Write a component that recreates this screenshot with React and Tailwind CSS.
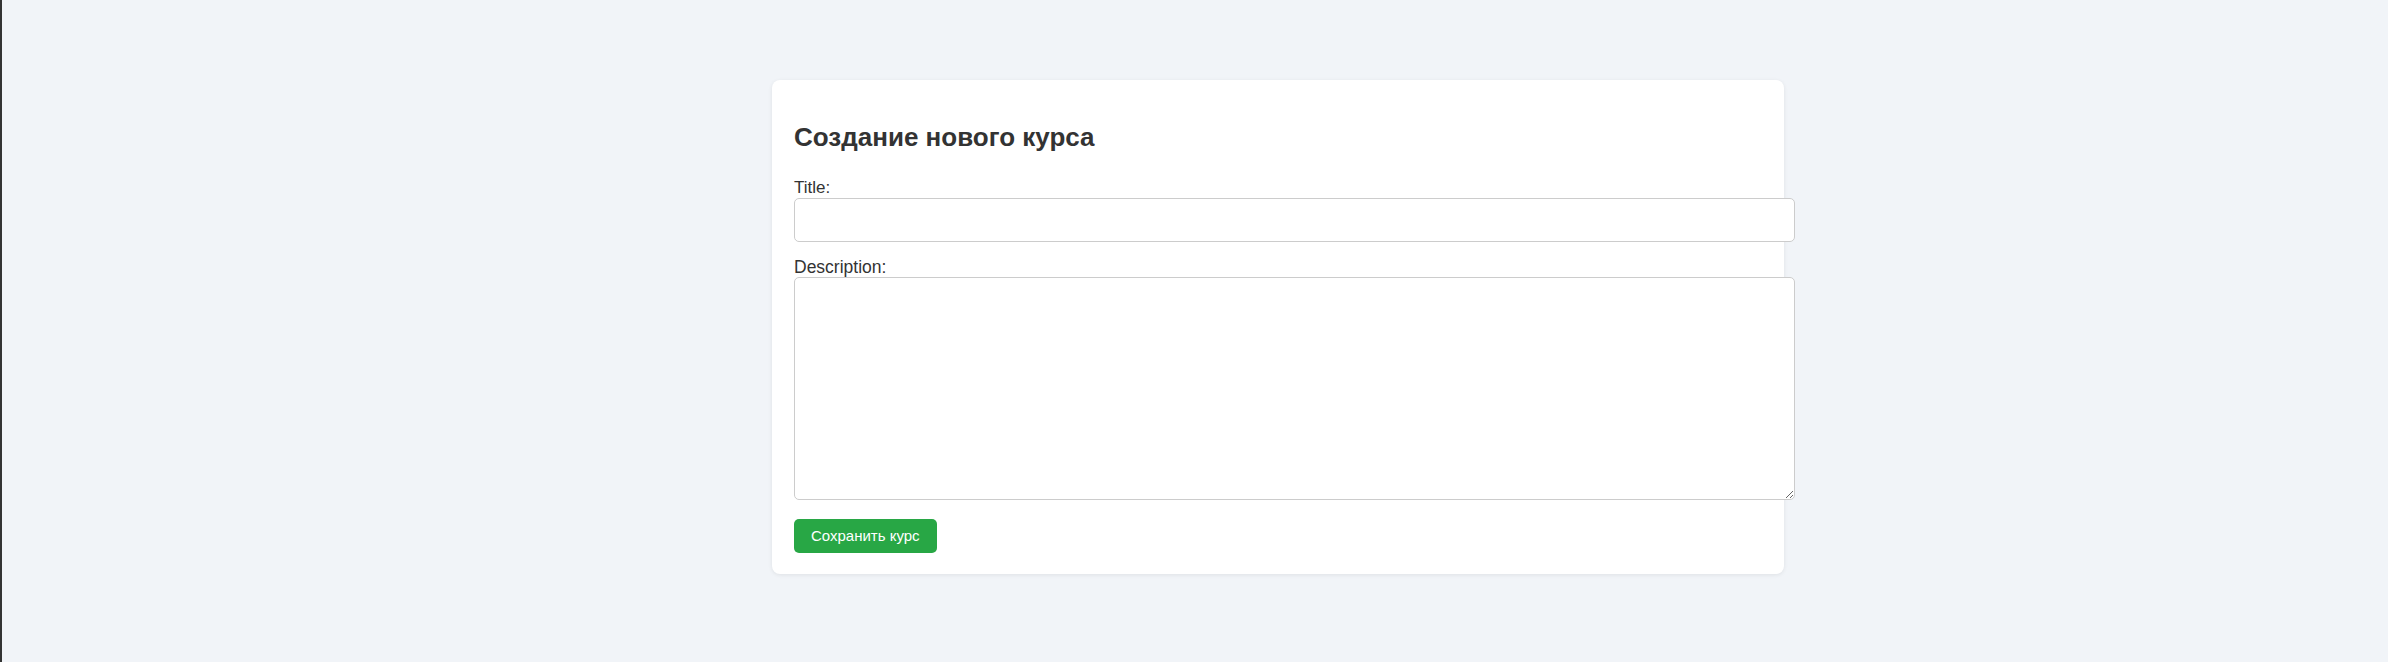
import React, { useState } from 'react';

const CreateCourse = () => {
  const [formData, setFormData] = useState({ title: '', description: '' });

  const handleChange = (input) => (e) => {
    setFormData({ ...formData, [input]: e.target.value });
  };

  const handleSubmit = (e) => {
    e.preventDefault();
  };

  return (
    <div className="min-h-[662px] bg-[#f1f4f8] border-l-2 border-[#333333] pt-[80px] font-['Liberation_Sans',Arial,sans-serif] text-[#333333]">
      {/* --- CARD --- */}
      <div className="ml-[770px] w-[1012px] h-[494px] bg-white rounded-[8px] shadow-[0_1px_4px_rgba(0,0,0,0.08)] px-[22px] pt-[43px]">
        <h2 className="text-[26px] leading-[29px] font-bold m-0">Создание нового курса</h2>

        <form onSubmit={handleSubmit} className="mt-[26px]">
          <label className="block text-[17px] leading-[20px]">Title:</label>
          <input
            type="text"
            value={formData.title}
            onChange={handleChange('title')}
            className="block w-[1001px] h-[44px] mb-[15px] px-[10px] border border-[#cccccc] rounded-[5px] bg-white text-[16px] outline-none"
          />

          <label className="block text-[17.5px] leading-[20px]">Description:</label>
          <textarea
            value={formData.description}
            onChange={handleChange('description')}
            className="block w-[1001px] h-[223px] px-[10px] py-[8px] border border-[#cccccc] rounded-[5px] bg-white text-[16px] outline-none"
          />

          <button
            type="submit"
            className="mt-[19px] h-[34px] px-[17px] bg-[#28a745] text-white text-[15px] rounded-[5px] hover:bg-[#218838]"
          >
            Сохранить курс
          </button>
        </form>
      </div>
    </div>
  );
};

export default CreateCourse;
